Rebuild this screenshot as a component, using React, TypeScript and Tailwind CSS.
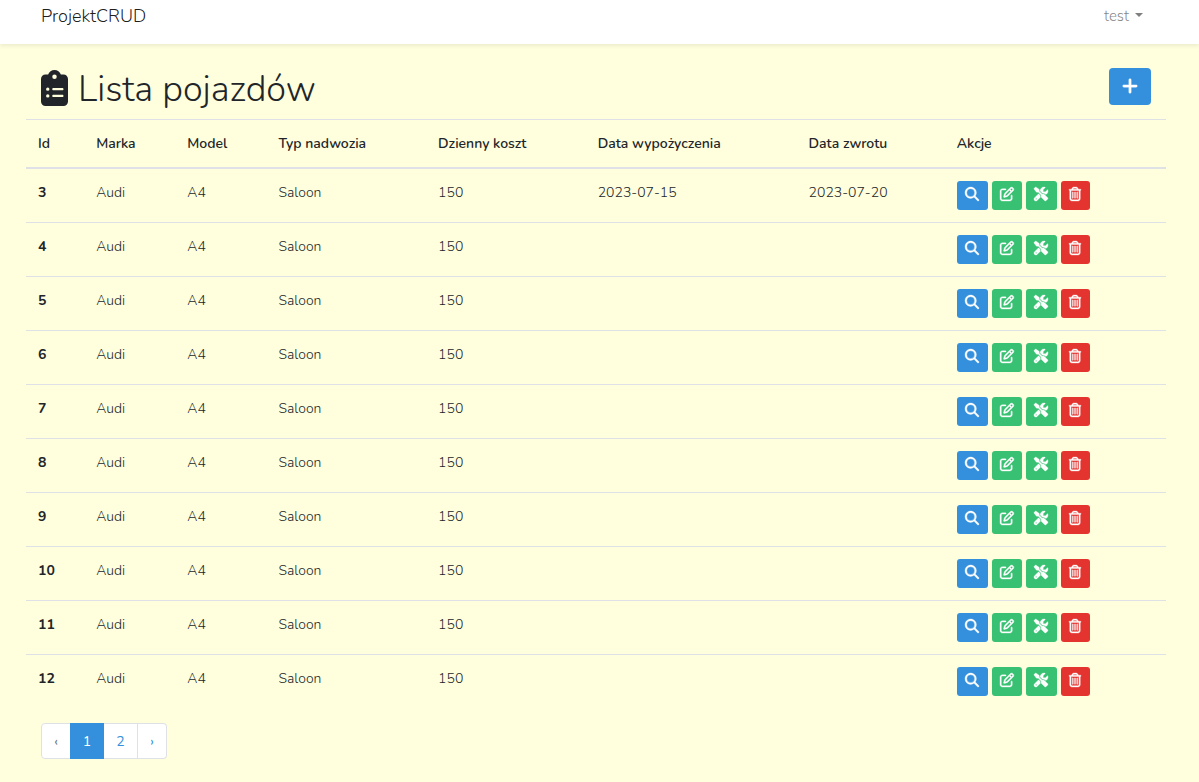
import React from "react";
import {
  FaClipboardList,
  FaMagnifyingGlass,
  FaPlus,
  FaRegPenToSquare,
  FaRegTrashCan,
  FaScrewdriverWrench,
} from "react-icons/fa6";

type Vehicle = {
  id: number;
  make: string;
  model: string;
  body: string;
  cost: number;
  rentedOn?: string;
  returnedOn?: string;
};

const vehicles: Vehicle[] = [3, 4, 5, 6, 7, 8, 9, 10, 11, 12].map((id) => ({
  id,
  make: "Audi",
  model: "A4",
  body: "Saloon",
  cost: 150,
  rentedOn: id === 3 ? "2023-07-15" : undefined,
  returnedOn: id === 3 ? "2023-07-20" : undefined,
}));

const columns = [
  { label: "Id", width: "w-[5.1%]" },
  { label: "Marka", width: "w-[8%]" },
  { label: "Model", width: "w-[8%]" },
  { label: "Typ nadwozia", width: "w-[14%]" },
  { label: "Dzienny koszt", width: "w-[14%]" },
  { label: "Data wypożyczenia", width: "w-[18.5%]" },
  { label: "Data zwrotu", width: "w-[13%]" },
  { label: "Akcje", width: "w-auto" },
];

const actionClass = "flex h-[29px] items-center justify-center rounded-[3px] pb-[3px] text-white";
const iconClass = "size-3.5 overflow-visible stroke-[12]";

function Navbar() {
  return (
    <nav className="flex h-11 items-start justify-between bg-white pr-14 pl-[41px] shadow-[0_2px_4px_rgba(0,0,0,0.075)]">
      <a href="#" className="text-[18px] leading-8 font-[350] text-black/90">
        ProjektCRUD
      </a>
      <button type="button" className="flex items-center gap-1.5 text-[15px] leading-8 font-[350] text-black/50">
        test
        <svg viewBox="0 0 8 4" className="mb-0.5 h-1 w-2 fill-current" aria-hidden="true">
          <path d="M0 0h8L4 4z" />
        </svg>
      </button>
    </nav>
  );
}

function Actions() {
  return (
    <div className="flex gap-1">
      <a href="#" aria-label="Podgląd" className={`${actionClass} w-[31px] bg-[#3490dc]`}>
        <FaMagnifyingGlass className={iconClass} />
      </a>
      <a href="#" aria-label="Edytuj" className={`${actionClass} w-[30px] bg-[#38c172]`}>
        <FaRegPenToSquare className={iconClass} />
      </a>
      <a href="#" aria-label="Serwis" className={`${actionClass} w-[31px] bg-[#38c172]`}>
        <FaScrewdriverWrench className={iconClass} />
      </a>
      <button type="button" aria-label="Usuń" className={`${actionClass} w-[29px] bg-[#e3342f]`}>
        <FaRegTrashCan className={iconClass} />
      </button>
    </div>
  );
}

export default function App() {
  return (
    <div className="min-h-screen bg-[#ffffde] font-['Nunito','Open_Sans',sans-serif] text-[14px] leading-[23px] text-[#212529]">
      <Navbar />
      <main className="pt-6 pr-[33px] pb-6 pl-[26px]">
        <header className="flex h-[51px] items-start justify-between px-[15px]">
          <h1 className="flex items-start gap-2.5 text-[36px] leading-[43px] font-[350]">
            <FaClipboardList className="mt-0.5 h-9 w-[27px]" />
            Lista pojazdów
          </h1>
          <a
            href="#"
            aria-label="Dodaj pojazd"
            className="flex h-[37px] w-[42px] items-center justify-center rounded bg-[#3490dc] pb-0.5 text-white"
          >
            <FaPlus className="size-[18px] stroke-[12]" />
          </a>
        </header>
        <table className="w-full table-fixed border-collapse text-left">
          <thead>
            <tr className="border-t border-b-2 border-[#dee2e6]">
              {columns.map((column) => (
                <th key={column.label} scope="col" className={`${column.width} px-3 py-3 font-[650]`}>
                  {column.label}
                </th>
              ))}
            </tr>
          </thead>
          <tbody>
            {vehicles.map((vehicle) => (
              <tr key={vehicle.id} className="border-t border-[#dee2e6] align-top font-[350]">
                <th scope="row" className="p-3 font-bold">
                  {vehicle.id}
                </th>
                <td className="p-3">{vehicle.make}</td>
                <td className="p-3">{vehicle.model}</td>
                <td className="p-3">{vehicle.body}</td>
                <td className="p-3">{vehicle.cost}</td>
                <td className="p-3">{vehicle.rentedOn}</td>
                <td className="p-3">{vehicle.returnedOn}</td>
                <td className="p-3">
                  <Actions />
                </td>
              </tr>
            ))}
          </tbody>
        </table>
        <nav aria-label="Strony" className="mt-[15px] ml-[15px] flex">
          <span className="flex h-9 w-[30px] items-center justify-center rounded-l border border-[#dee2e6] bg-white text-[#6c757d]">
            ‹
          </span>
          <span
            aria-current="page"
            className="-ml-px flex h-9 w-[34px] items-center justify-center border border-[#3490dc] bg-[#3490dc] text-white"
          >
            1
          </span>
          <a
            href="#"
            className="flex h-9 w-[34px] items-center justify-center border-y border-r border-[#dee2e6] bg-white text-[#3490dc]"
          >
            2
          </a>
          <a
            href="#"
            className="flex h-9 w-[29px] items-center justify-center rounded-r border-y border-r border-[#dee2e6] bg-white text-[#3490dc]"
          >
            ›
          </a>
        </nav>
      </main>
    </div>
  );
}
